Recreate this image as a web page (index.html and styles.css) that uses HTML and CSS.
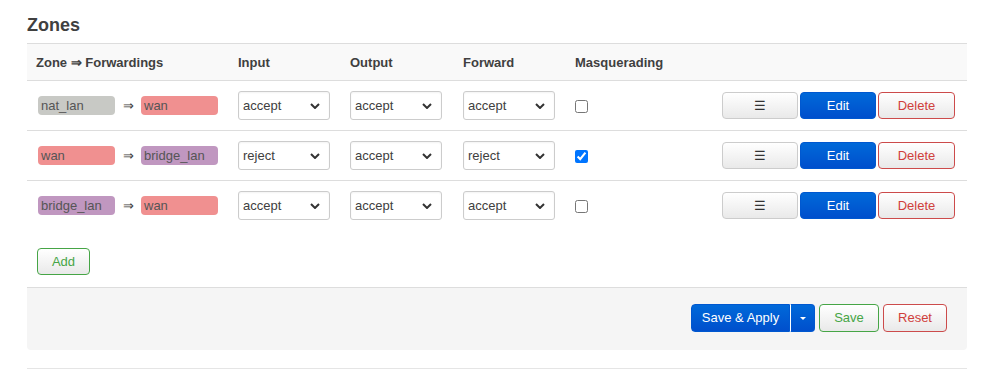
FILE: index.html
```html
<!DOCTYPE html>
<html lang="en">
<head>
  <meta charset="UTF-8" />
  <title>Firewall - Zone Settings</title>
  <link rel="stylesheet" href="styles.css">
</head>
<body>
  <div class="main">
    <h3>Zones</h3>

    <table class="zones">
      <colgroup>
        <col class="c-zone"><col class="c-sel"><col class="c-sel2"><col class="c-sel"><col class="c-masq"><col>
      </colgroup>
      <tr class="head">
        <th>Zone &rArr; Forwardings</th>
        <th>Input</th>
        <th>Output</th>
        <th>Forward</th>
        <th>Masquerading</th>
        <th></th>
      </tr>
      <tr>
        <td><div class="fwd"><span class="badge gray">nat_lan</span><span class="arrow">&rArr;</span><span class="badge red">wan</span></div></td>
        <td><div class="sel"><select><option>accept</option></select><svg viewBox="0 0 10 6" width="10" height="6"><path d="M1 1l4 4 4-4" fill="none" stroke="#333" stroke-width="2"/></svg></div></td>
        <td><div class="sel"><select><option>accept</option></select><svg viewBox="0 0 10 6" width="10" height="6"><path d="M1 1l4 4 4-4" fill="none" stroke="#333" stroke-width="2"/></svg></div></td>
        <td><div class="sel"><select><option>accept</option></select><svg viewBox="0 0 10 6" width="10" height="6"><path d="M1 1l4 4 4-4" fill="none" stroke="#333" stroke-width="2"/></svg></div></td>
        <td><input type="checkbox"></td>
        <td class="actions"><button class="btn">&#9776;</button><button class="btn blue">Edit</button><button class="btn danger">Delete</button></td>
      </tr>
      <tr>
        <td><div class="fwd"><span class="badge red">wan</span><span class="arrow">&rArr;</span><span class="badge purple">bridge_lan</span></div></td>
        <td><div class="sel"><select><option>reject</option></select><svg viewBox="0 0 10 6" width="10" height="6"><path d="M1 1l4 4 4-4" fill="none" stroke="#333" stroke-width="2"/></svg></div></td>
        <td><div class="sel"><select><option>accept</option></select><svg viewBox="0 0 10 6" width="10" height="6"><path d="M1 1l4 4 4-4" fill="none" stroke="#333" stroke-width="2"/></svg></div></td>
        <td><div class="sel"><select><option>reject</option></select><svg viewBox="0 0 10 6" width="10" height="6"><path d="M1 1l4 4 4-4" fill="none" stroke="#333" stroke-width="2"/></svg></div></td>
        <td><input type="checkbox" checked></td>
        <td class="actions"><button class="btn">&#9776;</button><button class="btn blue">Edit</button><button class="btn danger">Delete</button></td>
      </tr>
      <tr class="last">
        <td><div class="fwd"><span class="badge purple">bridge_lan</span><span class="arrow">&rArr;</span><span class="badge red">wan</span></div></td>
        <td><div class="sel"><select><option>accept</option></select><svg viewBox="0 0 10 6" width="10" height="6"><path d="M1 1l4 4 4-4" fill="none" stroke="#333" stroke-width="2"/></svg></div></td>
        <td><div class="sel"><select><option>accept</option></select><svg viewBox="0 0 10 6" width="10" height="6"><path d="M1 1l4 4 4-4" fill="none" stroke="#333" stroke-width="2"/></svg></div></td>
        <td><div class="sel"><select><option>accept</option></select><svg viewBox="0 0 10 6" width="10" height="6"><path d="M1 1l4 4 4-4" fill="none" stroke="#333" stroke-width="2"/></svg></div></td>
        <td><input type="checkbox"></td>
        <td class="actions"><button class="btn">&#9776;</button><button class="btn blue">Edit</button><button class="btn danger">Delete</button></td>
      </tr>
    </table>

    <div class="add-row">
      <button class="btn positive add">Add</button>
    </div>

    <div class="page-actions">
      <div class="split">
        <button class="btn blue apply">Save &amp; Apply</button><button class="btn blue caret"><svg viewBox="0 0 6 3" width="6" height="3"><path d="M0 0h6L3 3z" fill="#fff"/></svg></button>
      </div>
      <button class="btn positive">Save</button>
      <button class="btn danger">Reset</button>
    </div>

    <div class="rule"></div>
  </div>
</body>
</html>
```

FILE: styles.css
```css
body {
  margin: 0;
  font-family: "Liberation Sans", Arial, sans-serif;
  font-size: 13px;
  color: #404040;
  background: #fff;
}
.main {
  width: 940px;
  margin-left: 27px;
}
h3 {
  margin: 0;
  padding-top: 15px;
  height: 43px;
  box-sizing: border-box;
  font-size: 18px;
  line-height: 20px;
  color: #404040;
}

/* zone table */
.zones {
  width: 100%;
  border-collapse: collapse;
  table-layout: fixed;
}
.c-zone { width: 202px; }
.c-sel { width: 112px; }
.c-sel2 { width: 113px; }
.c-masq { width: 120px; }
.zones th,
.zones td {
  padding: 0 9px;
  text-align: left;
  white-space: nowrap;
}
.zones th {
  height: 36px;
  background: #f9f9f9;
  border-top: 1px solid #ddd;
  border-bottom: 1px solid #ddd;
  font-weight: bold;
  color: #404040;
}
.zones td {
  height: 49px;
  border-bottom: 1px solid #ddd;
}
.zones tr.last td {
  border-bottom: none;
}
.fwd {
  display: flex;
  align-items: center;
}
.badge {
  display: inline-block;
  width: 77px;
  height: 19px;
  line-height: 19px;
  padding: 0 3px;
  box-sizing: border-box;
  border-radius: 4px;
  color: #555;
  font-size: 13px;
}
.badge.gray { background: #c8c9c5; }
.badge.red { background: #f09090; }
.badge.purple { background: #c097c0; }
.arrow {
  width: 26px;
  text-align: center;
  color: #404040;
}
.fwd .badge:first-child { margin-left: 2px; }

.sel {
  position: relative;
  width: 92px;
  height: 29px;
}
.sel select {
  appearance: none;
  width: 92px;
  height: 29px;
  padding: 0 4px;
  border: 1px solid #ccc;
  border-radius: 3px;
  background: #fff;
  font-family: inherit;
  font-size: 13px;
  color: #404040;
  box-shadow: inset 0 1px 2px rgba(0,0,0,0.05);
}
.sel svg {
  position: absolute;
  right: 10px;
  top: 12px;
  pointer-events: none;
}
.zones input[type=checkbox] {
  margin: 0;
  width: 13px;
  height: 13px;
  vertical-align: middle;
}

/* buttons */
.btn {
  height: 27px;
  padding: 0 10px;
  border: 1px solid #ccc;
  border-radius: 4px;
  background: linear-gradient(#fff, #e9e9e9);
  font-family: inherit;
  font-size: 13px;
  color: #333;
  line-height: 25px;
}
.btn.blue {
  background: linear-gradient(#0069d9, #004fcc);
  border-color: #0058d0;
  color: #fff;
}
.btn.danger {
  border-color: #cc4b4b;
  color: #d0403c;
}
.btn.positive {
  border-color: #46a546;
  color: #46a546;
}
.actions {
  text-align: right !important;
  padding-right: 12px !important;
}
.actions .btn {
  width: 76px;
  margin-left: 2px;
}
.actions .btn.danger {
  width: 77px;
}

.add-row {
  padding: 18px 0 12px 10px;
}
.add {
  width: 53px;
  padding: 0;
}

.page-actions {
  height: 63px;
  box-sizing: border-box;
  background: #f5f5f5;
  border-top: 1px solid #ddd;
  border-radius: 0 0 4px 4px;
  display: flex;
  align-items: flex-start;
  justify-content: flex-end;
  gap: 4px;
  padding: 16px 20px 0 0;
}
.page-actions .btn {
  height: 28px;
  line-height: 26px;
}
.split {
  display: flex;
}
.split .apply {
  border-radius: 4px 0 0 4px;
  width: 99px;
  padding: 0;
}
.split .caret {
  border-radius: 0 4px 4px 0;
  border-left: 1px solid #fff;
  width: 25px;
  padding: 0;
  display: flex;
  align-items: center;
  justify-content: center;
}
.page-actions .positive { width: 60px; padding: 0; }
.page-actions .danger { width: 64px; padding: 0; }
.rule {
  margin-top: 18px;
  border-top: 1px solid #e5e5e5;
}
```
